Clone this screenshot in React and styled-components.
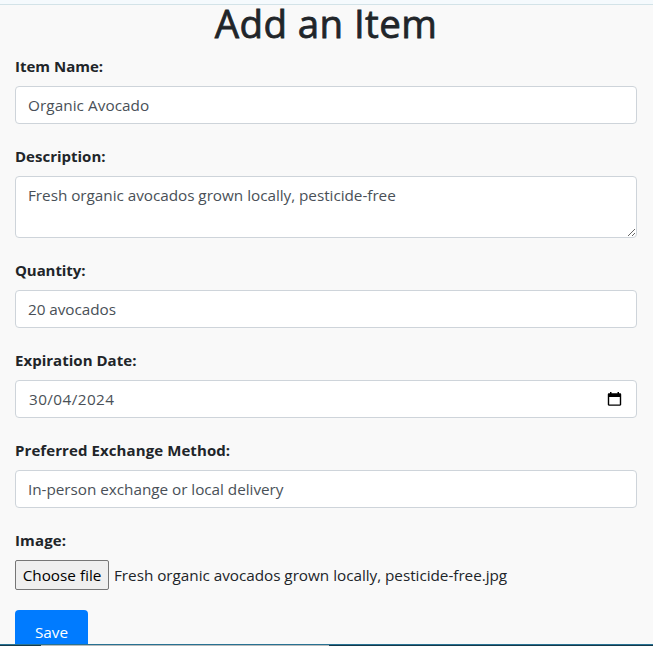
import React from "react";
import styled, { createGlobalStyle } from "styled-components";

const GlobalStyle = createGlobalStyle`
  *, *::before, *::after { box-sizing: border-box; }
  body {
    margin: 0;
    overflow: hidden;
    background: #f9f9f9;
    color: #212529;
    font-family: "Segoe UI", "Open Sans", "Noto Sans", sans-serif;
    font-size: 15.3px;
    line-height: 24px;
  }
`;

const Page = styled.div`
  height: 646px;
  display: flex;
  flex-direction: column;
`;

const TopStrip = styled.div`
  flex: none;
  height: 5px;
  background: #f5fafd;
  border-bottom: 1px solid #d3e3e8;
`;

const Content = styled.main`
  flex: 1;
  min-height: 0;
  padding: 0 16px 0 15px;
`;

const Title = styled.h1`
  margin: 0 0 12px;
  font-size: 38.5px;
  font-weight: 500;
  line-height: 37px;
  text-align: center;
  -webkit-text-stroke: 0.8px currentColor;
  letter-spacing: ${(p) => p.$tracking}px;
`;

const Group = styled.div`
  height: ${(p) => p.$height || 90}px;
  display: flex;
  flex-direction: column;
`;

const Label = styled.label`
  margin-bottom: 8px;
  font-size: 15px;
  font-weight: 700;
  letter-spacing: ${(p) => p.$tracking || 0}px;
`;

const Control = styled.input`
  display: block;
  width: 100%;
  height: 38px;
  padding: 6px 12px;
  border: 1px solid #ced4da;
  border-radius: 4px;
  outline: none;
  background: #fff;
  color: #495057;
  font: inherit;
  letter-spacing: ${(p) => p.$tracking || 0}px;
`;

const TextArea = styled(Control)`
  height: 62px;
  resize: vertical;
`;

const DateBox = styled.div`
  display: flex;
  align-items: center;
  height: 38px;
  padding: 0 14px 0 13px;
  border: 1px solid #ced4da;
  border-radius: 4px;
  background: #fff;
  color: #495057;
`;

const DateText = styled.span`
  flex: 1;
  letter-spacing: 0.42px;
`;

const FileRow = styled.div`
  display: flex;
  align-items: center;
  gap: 5px;
  height: 30px;
  white-space: nowrap;
`;

const FileButton = styled.button`
  width: 94px;
  height: 30px;
  padding: 0;
  border: 1px solid #767676;
  border-radius: 2px;
  background: #efefef;
  color: #000;
  font: inherit;
`;

const FileName = styled.span`
  letter-spacing: -0.035px;
`;

const SaveButton = styled.button`
  display: block;
  width: 73px;
  height: 34px;
  padding: 10px 0 0;
  border: 0;
  border-radius: 4px 4px 0 0;
  background: #007bff;
  color: #fff;
  font: inherit;
`;

const BottomEdge = styled.div`
  flex: none;
  height: 2px;
  display: grid;
  grid-template-columns: 41px 288px 1fr;
  border-top: 1px solid #287293;
`;

const EdgeSegment = styled.div`
  background: ${(p) => p.$color};
`;

function CalendarIcon() {
  return (
    <svg width="15" height="16" viewBox="0 0 15 16" aria-hidden="true">
      <path
        fill="#000"
        fillRule="evenodd"
        d="M3 1h1.5v1.3h6V1H12v1.3h1c.7 0 1.2.5 1.2 1.2v10c0 .7-.5 1.2-1.2 1.2H2c-.7 0-1.2-.5-1.2-1.2v-10c0-.7.5-1.2 1.2-1.2h1V1zM2.2 6v7.4h10.6V6H2.2z"
      />
    </svg>
  );
}

export default function App() {
  return (
    <>
      <GlobalStyle />
      <Page>
        <TopStrip />
        <Content>
          <Title $tracking={0.4}>Add an Item</Title>
          <Group>
            <Label htmlFor="name">Item Name:</Label>
            <Control id="name" defaultValue="Organic Avocado" $tracking={0.06} />
          </Group>
          <Group $height={114}>
            <Label htmlFor="description">Description:</Label>
            <TextArea
              as="textarea"
              id="description"
              spellCheck={false}
              defaultValue="Fresh organic avocados grown locally, pesticide-free"
              $tracking={-0.035}
            />
          </Group>
          <Group>
            <Label htmlFor="quantity" $tracking={-0.08}>Quantity:</Label>
            <Control id="quantity" defaultValue="20 avocados" $tracking={-0.05} />
          </Group>
          <Group>
            <Label as="span" $tracking={0.03}>Expiration Date:</Label>
            <DateBox>
              <DateText>30/04/2024</DateText>
              <CalendarIcon />
            </DateBox>
          </Group>
          <Group>
            <Label htmlFor="method" $tracking={0.09}>Preferred Exchange Method:</Label>
            <Control id="method" defaultValue="In-person exchange or local delivery" $tracking={-0.035} />
          </Group>
          <Group $height={82}>
            <Label as="span" $tracking={0.15}>Image:</Label>
            <FileRow>
              <FileButton type="button">Choose file</FileButton>
              <FileName>Fresh organic avocados grown locally, pesticide-free.jpg</FileName>
            </FileRow>
          </Group>
          <SaveButton type="submit">Save</SaveButton>
        </Content>
        <BottomEdge>
          <EdgeSegment $color="#163a4c" />
          <EdgeSegment $color="#b9bcbd" />
          <EdgeSegment $color="#163a4c" />
        </BottomEdge>
      </Page>
    </>
  );
}
